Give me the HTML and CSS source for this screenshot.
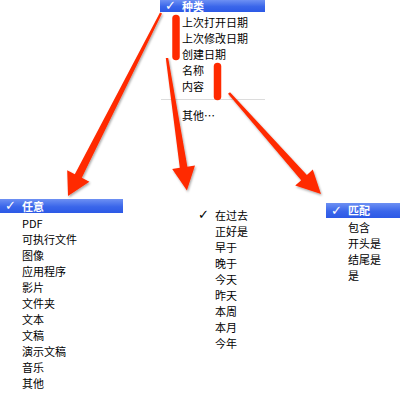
FILE: index.html
```html
<!DOCTYPE html>
<html>
<head>
<meta charset="utf-8">
<link rel="stylesheet" href="styles.css">
</head>
<body>
<div class="canvas">
  <div class="menu menu-kind">
    <div class="item selected top"><span class="check">✓</span>种类</div>
    <div class="item">上次打开日期</div>
    <div class="item">上次修改日期</div>
    <div class="item">创建日期</div>
    <div class="item">名称</div>
    <div class="item">内容</div>
    <div class="sep"></div>
    <div class="item">其他…</div>
  </div>

  <div class="menu menu-any">
    <div class="item selected h14"><span class="check">✓</span>任意</div>
    <div class="item">PDF</div>
    <div class="item">可执行文件</div>
    <div class="item">图像</div>
    <div class="item">应用程序</div>
    <div class="item">影片</div>
    <div class="item">文件夹</div>
    <div class="item">文本</div>
    <div class="item">文稿</div>
    <div class="item">演示文稿</div>
    <div class="item">音乐</div>
    <div class="item">其他</div>
  </div>

  <div class="menu menu-date">
    <div class="item"><span class="check dark">✓</span>在过去</div>
    <div class="item">正好是</div>
    <div class="item">早于</div>
    <div class="item">晚于</div>
    <div class="item">今天</div>
    <div class="item">昨天</div>
    <div class="item">本周</div>
    <div class="item">本月</div>
    <div class="item">今年</div>
  </div>

  <div class="menu menu-match">
    <div class="item selected h15"><span class="check">✓</span>匹配</div>
    <div class="item">包含</div>
    <div class="item">开头是</div>
    <div class="item">结尾是</div>
    <div class="item">是</div>
  </div>

  <svg class="overlay" width="400" height="400" viewBox="0 0 400 400">
    <defs>
      <filter id="sh" x="-20%" y="-20%" width="140%" height="140%">
        <feDropShadow dx="1" dy="1.5" stdDeviation="1" flood-color="#000" flood-opacity="0.35"/>
      </filter>
    </defs>
    <g stroke="#ff2a00" stroke-width="7.5" stroke-linecap="round" fill="none">
      <line x1="176" y1="18.5" x2="176" y2="56.5"/>
      <line x1="217.5" y1="66.5" x2="217.5" y2="96.5"/>
    </g>
    <g fill="#ff2a00" filter="url(#sh)">
      <polygon points="162,13.5 160,12.5 74.8,174.2 67.2,170.3 68,196 89.4,181.7 81.8,177.8"/>
      <polygon points="168.2,57.9 165.8,58.1 179.8,167.7 172.2,168.9 186.9,190.5 195,165.5 187.4,166.7"/>
      <polygon points="230,92.2 228,93.8 301.2,180.2 295.2,185.6 321,194 312.8,169.4 306.9,174.9"/>
    </g>
  </svg>
</div>
</body>
</html>
```

FILE: styles.css
```css
html, body {
  margin: 0;
  padding: 0;
  background: #fff;
}

.canvas {
  position: relative;
  width: 400px;
  height: 400px;
  overflow: hidden;
  background: #fff;
  font-family: "Noto Sans CJK SC", "Liberation Sans", sans-serif;
  font-size: 11px;
  color: #000;
}

.menu {
  position: absolute;
  display: flex;
  flex-direction: column;
}

.menu-kind { left: 160px; top: 0; width: 105px; }
.menu-any { left: 0; top: 199px; width: 123px; }
.menu-date { left: 193px; top: 207px; width: 90px; }
.menu-match { left: 326px; top: 203px; width: 74px; }

.item {
  position: relative;
  height: 16px;
  line-height: 16px;
  padding-left: 22px;
  white-space: nowrap;
}

.item.selected {
  background: linear-gradient(#6d90f3, #3a66ea 55%, #2c59e6);
  color: #fff;
  font-weight: 700;
}

.item.top {
  height: 12px;
  line-height: 12px;
  margin-bottom: 2px;
}

.item.h14 {
  height: 14px;
  line-height: 14px;
  margin-bottom: 2px;
}

.item.h15 {
  height: 15px;
  line-height: 15px;
  margin-bottom: 1px;
}

.check {
  position: absolute;
  left: 5px;
  top: 0;
  font-family: "DejaVu Sans", sans-serif;
  font-weight: 700;
  font-size: 13px;
}

.check.dark {
  color: #000;
}

.sep {
  height: 13px;
  display: flex;
  flex-direction: column;
}

.sep::before {
  content: "";
  display: block;
  margin-top: 5px;
  margin-left: 1px;
  height: 1px;
  background: #dcdcdc;
}

.overlay {
  position: absolute;
  left: 0;
  top: 0;
  pointer-events: none;
}
```
